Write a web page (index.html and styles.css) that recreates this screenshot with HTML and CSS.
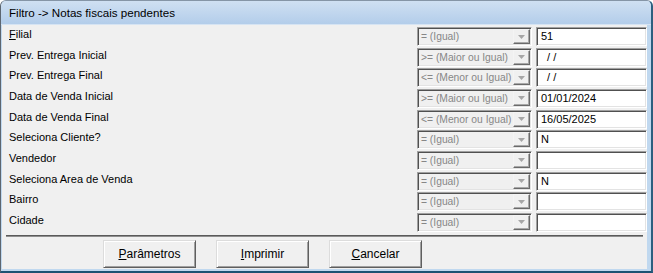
FILE: index.html
```html
<!DOCTYPE html>
<html lang="pt-BR">
<head>
<meta charset="utf-8">
<title>Filtro -> Notas fiscais pendentes</title>
<link rel="stylesheet" href="styles.css">
</head>
<body>
<div class="window">
  <div class="titlebar">Filtro -&gt; Notas fiscais pendentes</div>
  <div class="frame">
    <div class="client">
      <div class="rows">
        <div class="label"><u>F</u>ilial</div>
        <div class="combo"><span class="combo-text">= (Igual)</span><span class="drop"><svg width="7" height="4" viewBox="0 0 7 4"><path d="M0 0H7L3.5 4Z" fill="#a6a6a6"/></svg></span></div>
        <div class="input">51</div>

        <div class="label">Prev. Entrega Inicial</div>
        <div class="combo"><span class="combo-text">&gt;= (Maior ou Igual)</span><span class="drop"><svg width="7" height="4" viewBox="0 0 7 4"><path d="M0 0H7L3.5 4Z" fill="#a6a6a6"/></svg></span></div>
        <div class="input">  / /</div>

        <div class="label">Prev. Entrega Final</div>
        <div class="combo"><span class="combo-text">&lt;= (Menor ou Igual)</span><span class="drop"><svg width="7" height="4" viewBox="0 0 7 4"><path d="M0 0H7L3.5 4Z" fill="#a6a6a6"/></svg></span></div>
        <div class="input">  / /</div>

        <div class="label">Data de Venda Inicial</div>
        <div class="combo"><span class="combo-text">&gt;= (Maior ou Igual)</span><span class="drop"><svg width="7" height="4" viewBox="0 0 7 4"><path d="M0 0H7L3.5 4Z" fill="#a6a6a6"/></svg></span></div>
        <div class="input">01/01/2024</div>

        <div class="label">Data de Venda Final</div>
        <div class="combo"><span class="combo-text">&lt;= (Menor ou Igual)</span><span class="drop"><svg width="7" height="4" viewBox="0 0 7 4"><path d="M0 0H7L3.5 4Z" fill="#a6a6a6"/></svg></span></div>
        <div class="input">16/05/2025</div>

        <div class="label">Seleciona Cliente?</div>
        <div class="combo"><span class="combo-text">= (Igual)</span><span class="drop"><svg width="7" height="4" viewBox="0 0 7 4"><path d="M0 0H7L3.5 4Z" fill="#a6a6a6"/></svg></span></div>
        <div class="input">N</div>

        <div class="label">Vendedor</div>
        <div class="combo"><span class="combo-text">= (Igual)</span><span class="drop"><svg width="7" height="4" viewBox="0 0 7 4"><path d="M0 0H7L3.5 4Z" fill="#a6a6a6"/></svg></span></div>
        <div class="input"></div>

        <div class="label">Seleciona Area de Venda</div>
        <div class="combo"><span class="combo-text">= (Igual)</span><span class="drop"><svg width="7" height="4" viewBox="0 0 7 4"><path d="M0 0H7L3.5 4Z" fill="#a6a6a6"/></svg></span></div>
        <div class="input">N</div>

        <div class="label">Bairro</div>
        <div class="combo"><span class="combo-text">= (Igual)</span><span class="drop"><svg width="7" height="4" viewBox="0 0 7 4"><path d="M0 0H7L3.5 4Z" fill="#a6a6a6"/></svg></span></div>
        <div class="input"></div>

        <div class="label">Cidade</div>
        <div class="combo"><span class="combo-text">= (Igual)</span><span class="drop"><svg width="7" height="4" viewBox="0 0 7 4"><path d="M0 0H7L3.5 4Z" fill="#a6a6a6"/></svg></span></div>
        <div class="input"></div>
      </div>
      <div class="separator"></div>
      <div class="buttons">
        <div class="button"><u>P</u>arâmetros</div>
        <div class="button"><u>I</u>mprimir</div>
        <div class="button"><u>C</u>ancelar</div>
      </div>
    </div>
  </div>
</div>
</body>
</html>
```
FILE: styles.css
```css
html, body {
  margin: 0;
  padding: 0;
  background: #ffffff;
}

.window {
  width: 653px;
  height: 273px;
  box-sizing: border-box;
  border-top: 1px solid #8595a6;
  border-left: 1px solid #5d6670;
  border-right: 2px solid #2d5f7f;
  border-bottom: 2px solid #1d5272;
  border-radius: 6px 6px 0 0;
  display: flex;
  flex-direction: column;
  overflow: hidden;
  font-family: "Liberation Sans", Arial, sans-serif;
  background: #bed6ee;
}

.titlebar {
  height: 24px;
  box-sizing: border-box;
  padding-left: 8px;
  line-height: 24px;
  font-size: 11.6px;
  color: #000;
  background: linear-gradient(#cfe0f2, #b3cdea);
  border-bottom: 1px solid #d6e4f3;
}

.frame {
  flex: 1;
  display: flex;
  padding: 0 4px 2px 1px;
  background: #c0d8ef;
}

.client {
  flex: 1;
  background: #f0f0f0;
  display: flex;
  flex-direction: column;
  padding-top: 2px;
}

.rows {
  display: grid;
  grid-template-columns: 1fr 115px 111px;
  grid-auto-rows: 20.67px;
  column-gap: 4px;
  padding-left: 7px;
}

.label {
  font-size: 11px;
  line-height: 13px;
  padding-top: 1px;
  color: #000;
  white-space: nowrap;
}

.combo {
  height: 19px;
  box-sizing: border-box;
  border-top: 1px solid #a0a0a0;
  border-left: 1px solid #a0a0a0;
  border-right: 1px solid #ffffff;
  border-bottom: 1px solid #ffffff;
  box-shadow: inset 1px 1px 0 #505050, inset -1px -1px 0 #e3e3e3;
  background: #f0f0f0;
  display: flex;
  align-items: stretch;
  padding: 1px;
}

.combo-text {
  flex: 1;
  min-width: 0;
  font-size: 10.3px;
  line-height: 15px;
  padding-left: 2px;
  color: #878787;
  white-space: nowrap;
  overflow: hidden;
}

.drop {
  flex: none;
  width: 17px;
  box-sizing: border-box;
  border-top: 1px solid #f4f4f4;
  border-left: 1px solid #f4f4f4;
  border-right: 1px solid #6a6a6a;
  border-bottom: 1px solid #6a6a6a;
  box-shadow: inset -1px -1px 0 #a8a8a8;
  background: #f0f0f0;
  display: flex;
  align-items: center;
  justify-content: center;
}

.drop svg {
  display: block;
}

.input {
  height: 19px;
  box-sizing: border-box;
  border-top: 1px solid #a0a0a0;
  border-left: 1px solid #a0a0a0;
  border-right: 1px solid #ffffff;
  border-bottom: 1px solid #ffffff;
  box-shadow: inset 1px 1px 0 #505050, inset -1px -1px 0 #e3e3e3;
  background: #ffffff;
  font-size: 11px;
  line-height: 17px;
  padding-left: 4px;
  color: #000;
  white-space: pre;
}

.separator {
  margin: 1px 4px 0 4px;
  height: 2px;
  border-top: 1px solid #5a5a5a;
  border-bottom: 1px solid #8f8f8f;
  box-sizing: border-box;
}

.buttons {
  display: flex;
  gap: 20px;
  padding-left: 101px;
  margin-top: 3px;
}

.button {
  width: 93px;
  height: 28px;
  box-sizing: border-box;
  border: 1px solid;
  border-color: #dcdcdc #5f5f5f #5f5f5f #dcdcdc;
  box-shadow: inset 1px 1px 0 #ffffff, inset -1px -1px 0 #a0a0a0;
  background: #f0f0f0;
  font-size: 12px;
  line-height: 26px;
  text-align: center;
  color: #000;
}
```
